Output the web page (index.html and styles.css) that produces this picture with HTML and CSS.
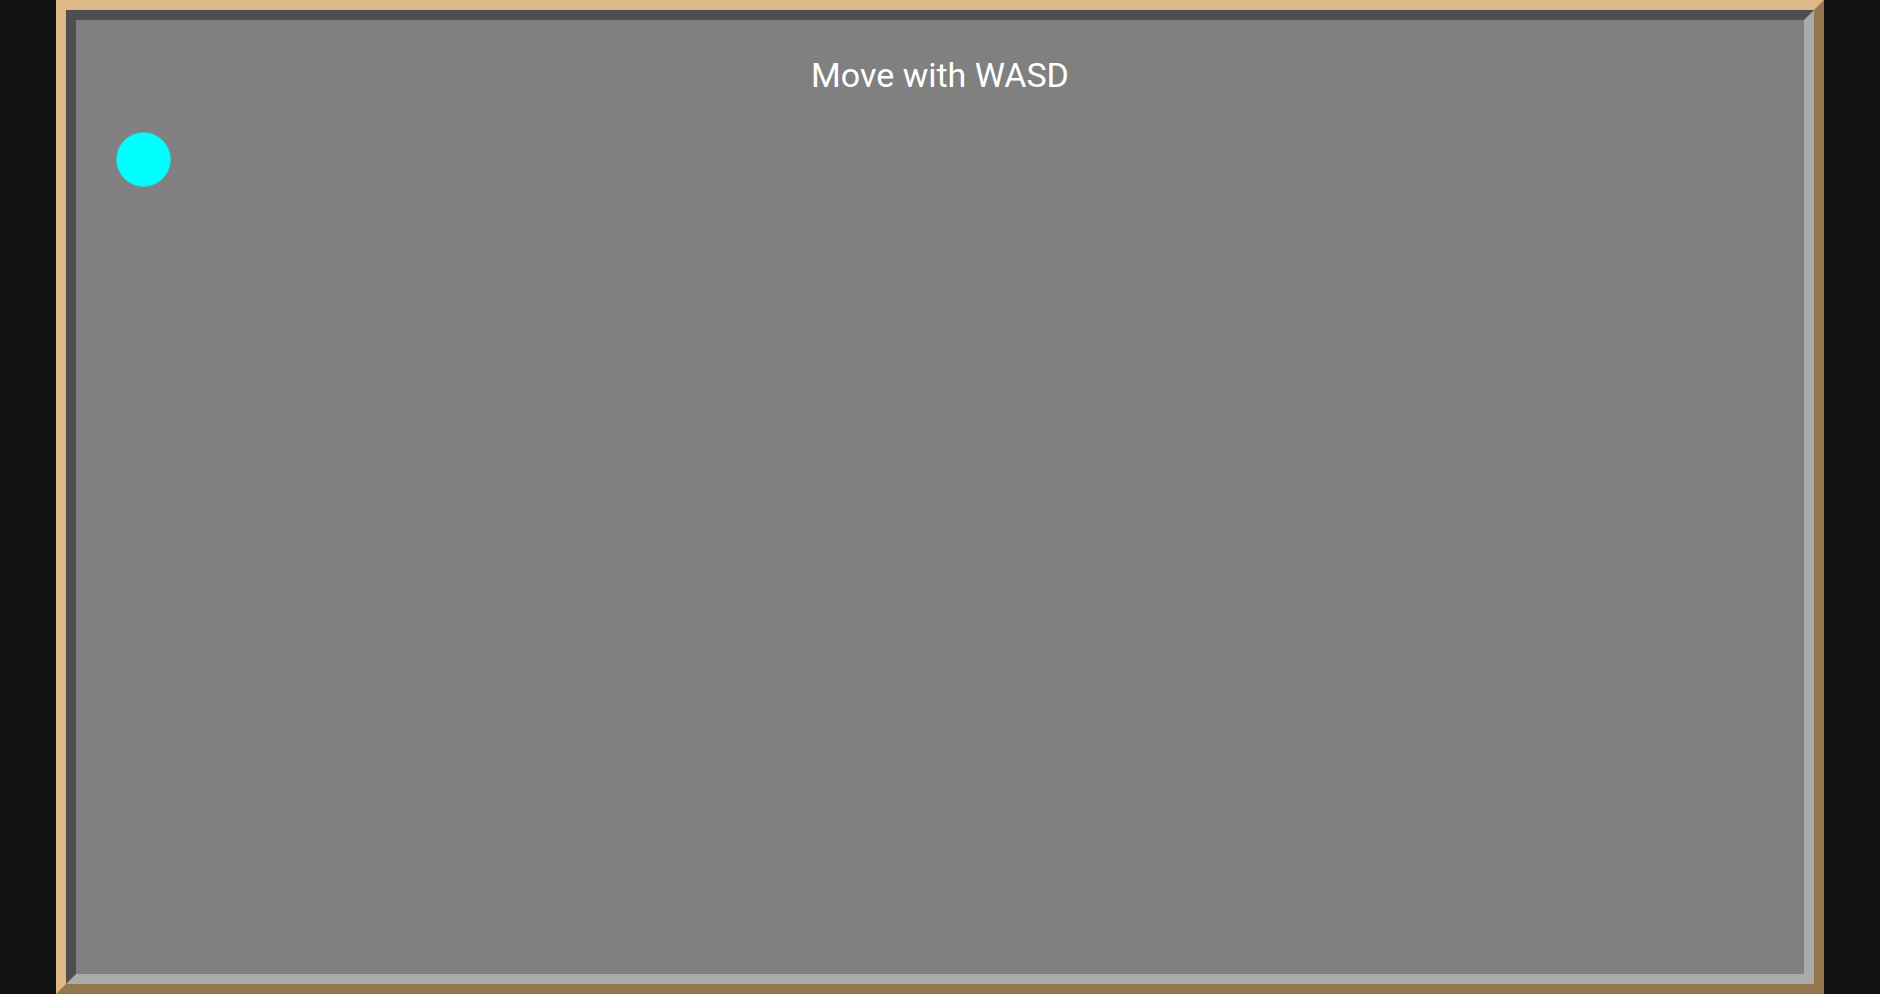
FILE: index.html
```html
<!DOCTYPE html>
<html>
<head>
<meta charset="utf-8">
<link rel="stylesheet" href="styles.css">
</head>
<body>
<div class="frame">
  <div class="board">
    <div class="hint">Move with WASD</div>
    <div class="player"></div>
  </div>
</div>
</body>
</html>
```
FILE: styles.css
```css
html, body {
  margin: 0;
  padding: 0;
  height: 100%;
  background: #111111;
  overflow: hidden;
}
body {
  display: flex;
  justify-content: center;
}
.frame {
  width: 1768px;
  height: 994px;
  box-sizing: border-box;
  border: 10px solid;
  border-color: #deb887 #94774f #94774f #deb887;
}
.board {
  position: relative;
  height: 100%;
  box-sizing: border-box;
  border: 10px solid;
  border-color: #4f4f4f #aaaaaa #aaaaaa #4f4f4f;
  background: #808080;
}
.hint {
  font-family: Roboto, "Liberation Sans", sans-serif;
  font-size: 34px;
  color: #ffffff;
  text-align: center;
  padding-top: 35px;
  line-height: 40px;
}
.player {
  position: absolute;
  left: 40px;
  top: 112px;
  width: 53px;
  height: 53px;
  border-radius: 50%;
  background: #00ffff;
  border: 1px solid #3fc9c9;
}
```
